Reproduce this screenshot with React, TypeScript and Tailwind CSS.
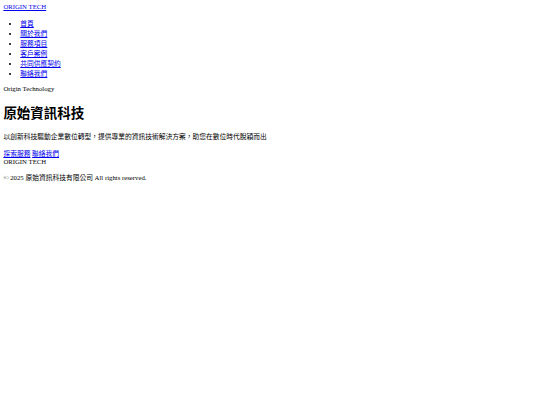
import React from "react";

const font = "font-['Liberation_Serif','Noto_Sans_CJK_TC',serif]";

export default function App() {
  const nav = ["首頁", "關於我們", "服務項目", "客戶案例", "共同供應契約", "聯絡我們"];
  return (
    <div className={`[zoom:0.421875] ${font} text-[16px] leading-[normal] text-black bg-white`}>
      <div className="m-2">
        <header>
          <a href="#" className="text-[#0000ee] underline">ORIGIN TECH</a>
          <nav>
            <ul className="list-disc pl-10 mt-[18.4px] mb-4">
              {nav.map((n) => (
                <li key={n}>
                  <a href="#" className="text-[#0000ee] underline">{n}</a>
                </li>
              ))}
            </ul>
          </nav>
        </header>
        <main>
          <div>Origin Technology</div>
          <h1 className="text-[32px] font-bold mt-[23.84px] mb-[21.44px]">原始資訊科技</h1>
          <p className="my-4">以創新科技驅動企業數位轉型，提供專業的資訊技術解決方案，助您在數位時代脫穎而出</p>
          <div>
            <a href="#" className="text-[#0000ee] underline">探索服務</a>{" "}
            <a href="#" className="text-[#0000ee] underline">聯絡我們</a>
          </div>
        </main>
        <footer>
          <div>ORIGIN TECH</div>
          <p className="mt-[18.4px] mb-4">© 2025 原始資訊科技有限公司 All rights reserved.</p>
        </footer>
      </div>
    </div>
  );
}
